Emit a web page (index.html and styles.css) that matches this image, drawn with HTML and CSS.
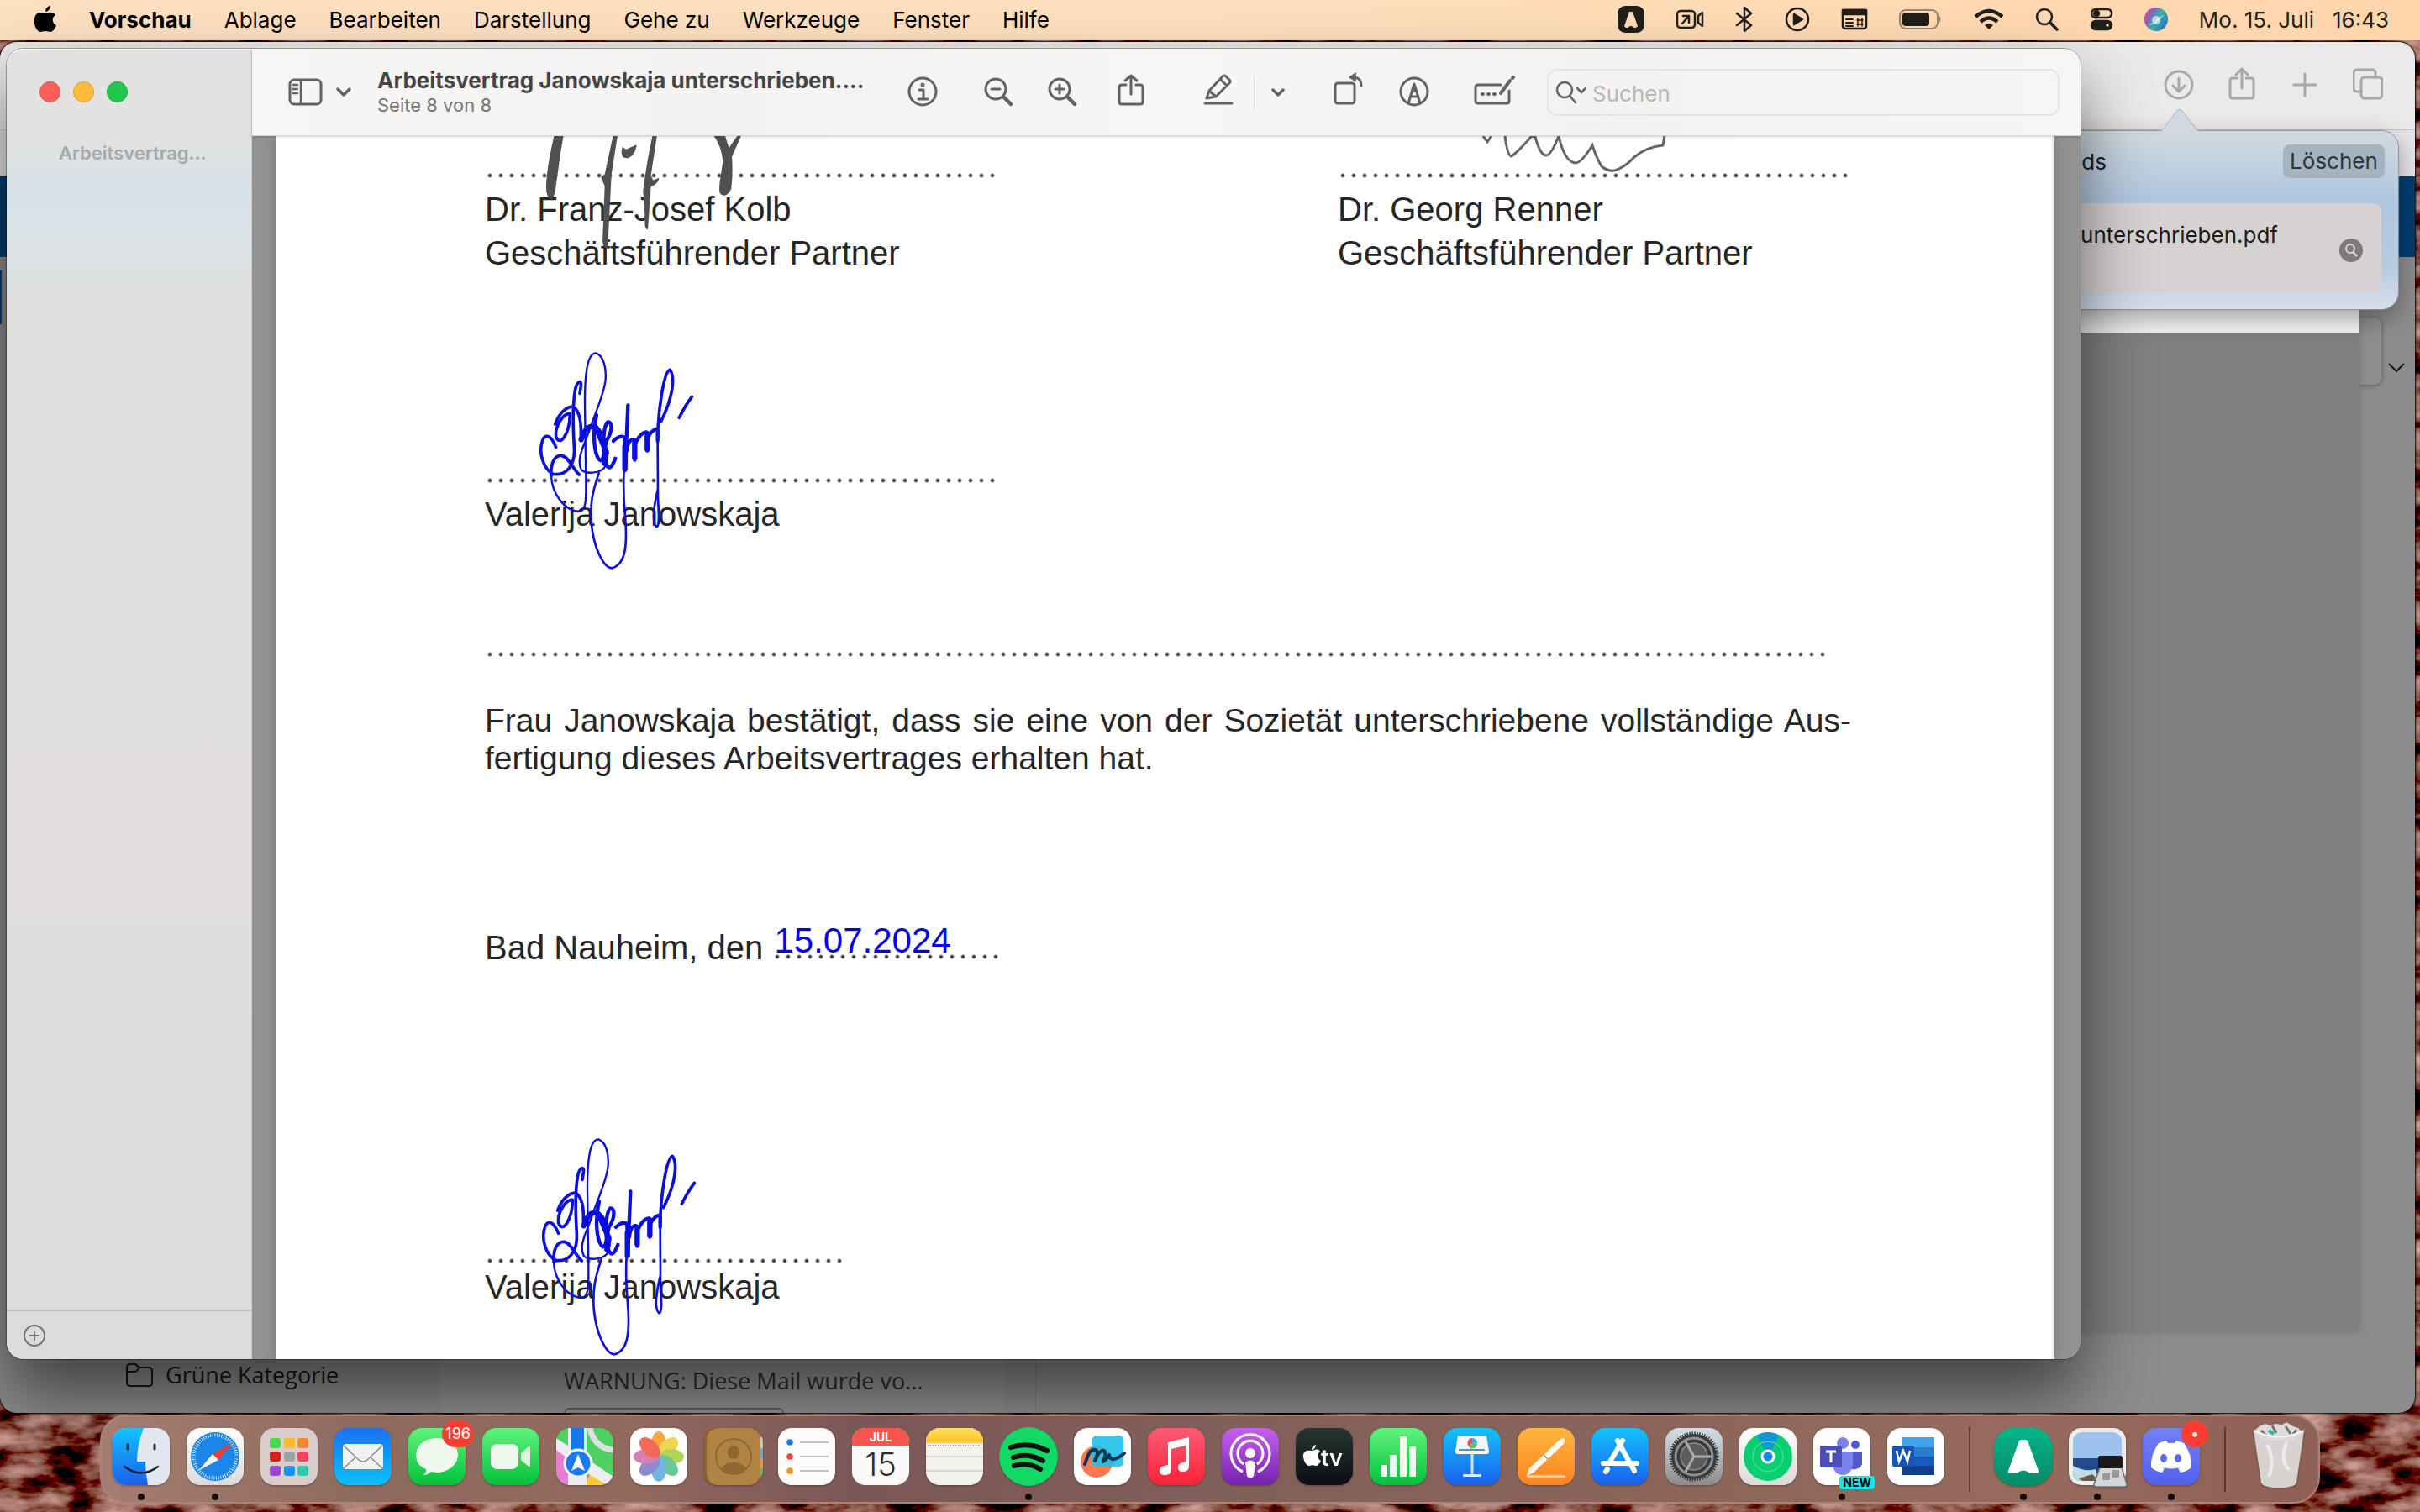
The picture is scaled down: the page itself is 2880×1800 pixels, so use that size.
FILE: index.html
```html
<!DOCTYPE html>
<html lang="de">
<head>
<meta charset="utf-8">
<title>Vorschau</title>
<link rel="stylesheet" href="styles.css">
</head>
<body>
<div class="desktop">
  <svg class="wallpaper" aria-hidden="true">
    <filter id="rock" x="0" y="0" width="100%" height="100%">
      <feTurbulence type="fractalNoise" baseFrequency="0.018 0.04" numOctaves="5" seed="8"/>
      <feColorMatrix values="1.3 0 0 0 -.42  .9 0 0 0 -.38  .8 0 0 0 -.35  0 0 0 0 1"/>
    </filter>
    <rect width="100%" height="100%" filter="url(#rock)"/>
  </svg>

  <header class="menubar">
    <nav class="menus">
      <button class="apple" aria-label="Apple"><svg width="26" height="32" viewBox="0 0 26 32"><path d="M13 9c2 0 4-2 7-1 2 0 4 1 5 3-5 3-4 10 1 12-1 3-4 8-7 8-2 0-3-1-6-1s-4 1-6 1c-4 0-8-8-7-14C0 10 4 8 7 8c3 0 4 1 6 1zM13 7c0-4 3-7 6-7 0 4-3 7-6 7z"/></svg></button>
      <button class="menu current">Vorschau</button>
      <button class="menu">Ablage</button>
      <button class="menu">Bearbeiten</button>
      <button class="menu">Darstellung</button>
      <button class="menu">Gehe zu</button>
      <button class="menu">Werkzeuge</button>
      <button class="menu">Fenster</button>
      <button class="menu">Hilfe</button>
    </nav>
    <div class="status">
      <svg width="32" height="32" viewBox="0 0 32 32"><rect width="32" height="32" rx="9" fill="#221e1a"/><path d="M14 7h4l6 17-2 2h-2q-4-4-8 0h-2l-2-2z" fill="#fddcb8"/></svg>
      <svg class="line" width="34" height="28" viewBox="0 0 34 28"><rect x="2" y="4" width="21" height="20" rx="4"/><path d="M8 19l8-9M9 10h7v8M27 10l5-4v16l-5-4z"/></svg>
      <svg class="line" width="22" height="30" viewBox="0 0 22 30"><path d="M2 8l17 14-8 7V1l8 7L2 22"/></svg>
      <svg class="line" width="30" height="30" viewBox="0 0 30 30"><circle cx="15" cy="15" r="13"/><path d="M11 9l10 6-10 6z" fill="#221e1a"/></svg>
      <svg class="line" width="32" height="26" viewBox="0 0 32 26"><rect x="2" y="2" width="28" height="22" rx="3"/><path d="M2 2h28v5H2z" fill="#221e1a"/><path d="M6 13h8M6 17h8M6 21h8" stroke-width="2"/><path d="M19 14h7M19 19h7M20 12v9M25 12v9" stroke-width="1.5"/></svg>
      <svg width="52" height="26" viewBox="0 0 52 26"><rect x="1" y="2" width="45" height="22" rx="7" fill="none" stroke="#9a8775" stroke-width="2"/><rect x="4" y="5" width="32" height="16" rx="4" fill="#221e1a"/><path d="M48 9q3 4 0 8z" fill="#9a8775"/></svg>
      <svg width="36" height="26" viewBox="0 0 36 26" fill="none" stroke="#221e1a" stroke-width="4.500"><path d="M2 10q16-14 32 0M8 16q10-9 20 0"/><path d="M13 20q5-4 10 0l-5 5z" fill="#221e1a" stroke="none"/></svg>
      <svg class="line" width="28" height="28" viewBox="0 0 28 28"><circle cx="11" cy="11" r="9"/><path d="M18 18l8 8" stroke-width="3.500"/></svg>
      <svg class="line" width="28" height="28" viewBox="0 0 28 28"><rect x="2" y="2" width="24" height="10" rx="5"/><circle cx="8" cy="7" r="3" fill="#221e1a"/><rect x="2" y="16" width="24" height="10" rx="5" fill="#221e1a"/><circle cx="21" cy="21" r="3" fill="#fddcb8"/></svg>
      <svg width="28" height="28" viewBox="0 0 28 28"><defs><linearGradient id="siri" x1="0" x2="1" y2=".6"><stop stop-color="#ec2f7e"/><stop offset=".4" stop-color="#7a6fc4"/><stop offset=".6" stop-color="#38b3a0"/><stop offset="1" stop-color="#2d76c9"/></linearGradient></defs><circle cx="14" cy="14" r="14" fill="url(#siri)"/><circle cx="14" cy="15" r="5" fill="#fff" opacity=".6"/><path d="M4 20q8-2 10-5 4-5 10-6-4 4-8 7-5 5-12 4z" fill="#fff" opacity=".5"/></svg>
      <time class="clock">Mo. 15. Juli&nbsp;&nbsp; 16:43</time>
    </div>
  </header>

  <section class="browser">
    <div class="browser-bar">
      <button aria-label="Downloads anzeigen"><svg width="36" height="40" viewBox="0 0 36 40"><circle cx="18" cy="21" r="16"/><path d="M18 13v16M11 22l7 7 7-7"/></svg></button>
      <button aria-label="Teilen"><svg width="36" height="40" viewBox="0 0 36 40"><path d="M13 13H7q-3 0-3 3v18q0 3 3 3h22q3 0 3-3V16q0-3-3-3h-6M18 25V2M11 9l7-7 7 7"/></svg></button>
      <button aria-label="Neuer Tab"><svg width="36" height="40" viewBox="0 0 36 40"><path d="M18 8v26M5 21h26"/></svg></button>
      <button aria-label="Tabübersicht"><svg width="36" height="40" viewBox="0 0 36 40"><rect x="10" y="12" width="25" height="25" rx="4"/><path d="M10 29H5q-4 0-4-4V7q0-4 4-4h18q4 0 4 4v5"/></svg></button>
    </div>
    <div class="tabs"></div>
    <div class="mail-head"></div>
    <div class="mail">
      <div class="folders">
        <a class="folder" href="#"><svg width="34" height="30" viewBox="0 0 34 30"><path d="M2 24V6q0-4 4-4h6l5 4h11q4 0 4 4v14q0 4-4 4H6q-4 0-4-4zM2 11h9q3 0 6-5"/></svg>Grüne Kategorie</a>
      </div>
      <div class="messages"><p class="snippet">WARNUNG: Diese Mail wurde vo...</p><div class="attachment"></div></div>
      <div class="reading"></div>
    </div>
    <div class="side-card"></div>
    <svg class="expand" width="22" height="14" viewBox="0 0 22 14"><path d="M2 2l9 9 9-9"/></svg>
    <div class="viewer"></div>
    <div class="popover">
      <svg class="arrow" width="56" height="27" viewBox="0 0 56 27"><path d="M0 27q7 0 11-6L24 3q4-5 8 0l13 18q4 6 11 6z" fill="#d0d9e1"/><path d="M0 26q7 0 11-6L24 3q4-5 8 0l13 17q4 6 11 6" fill="none" stroke="#a9afb5"/></svg>
      <div class="popover-head"><span>Downloads</span><button class="clear">Löschen</button></div>
      <div class="download"><span>unterschrieben.pdf</span><button class="reveal" aria-label="Im Finder zeigen"><svg width="28" height="28" viewBox="0 0 28 28"><circle cx="14" cy="14" r="14" fill="#7d7a79"/><circle cx="13" cy="12" r="5" fill="none" stroke="#d6d2d1" stroke-width="2"/><path d="M16 16l5 5" stroke="#d6d2d1" stroke-width="2.500"/></svg></button></div>
    </div>
  </section>

  <main class="preview">
    <aside class="sidebar">
      <div class="lights"><button class="light close" aria-label="Schließen"></button><button class="light min" aria-label="Minimieren"></button><button class="light max" aria-label="Zoomen"></button></div>
      <p class="thumb-title">Arbeitsvertrag...</p>
      <footer class="side-foot"><button aria-label="Hinzufügen"><svg width="28" height="28" viewBox="0 0 28 28"><circle cx="14" cy="14" r="12"/><path d="M14 8v12M8 14h12"/></svg></button></footer>
    </aside>
    <div class="pane">
      <div class="toolbar">
        <button class="tool side" aria-label="Seitenleiste"><svg width="74" height="44" viewBox="0 0 74 44"><rect x="2" y="7" width="37" height="29" rx="5"/><path d="M15 7v29M6 13h5M6 18h5M6 23h5" stroke-width="2.500"/><path d="M59 18l7 7 7-7" stroke-width="3.500"/></svg></button>
        <div class="doc-title"><h1>Arbeitsvertrag Janowskaja unterschrieben....</h1><p>Seite 8 von 8</p></div>
        <button class="tool" aria-label="Info"><svg width="44" height="44" viewBox="0 0 44 44"><circle cx="22" cy="21" r="16"/><path d="M18 19h5v10M17 30h11"/><circle cx="22" cy="13" r="1"/></svg></button>
        <button class="tool g46" aria-label="Verkleinern"><svg width="44" height="44" viewBox="0 0 44 44"><circle cx="19" cy="18" r="12"/><path d="M14 18h10"/><path d="M28 27l9 9" stroke-width="4.500"/></svg></button>
        <button class="tool g32" aria-label="Vergrößern"><svg width="44" height="44" viewBox="0 0 44 44"><circle cx="19" cy="18" r="12"/><path d="M14 18h10M19 13v10"/><path d="M28 27l9 9" stroke-width="4.500"/></svg></button>
        <button class="tool g38" aria-label="Teilen"><svg width="44" height="44" viewBox="0 0 44 44"><path d="M16 13h-5q-3 0-3 3v17q0 3 3 3h22q3 0 3-3V16q0-3-3-3h-5M22 24V2M15 8l7-6 7 6"/></svg></button>
        <button class="tool g60" aria-label="Markieren"><svg width="44" height="44" viewBox="0 0 44 44"><path d="M6 35h32M8 29l3-9L27 3q2-2 4 0l4 4q2 2 0 4L19 27zM11 20l8 7M25 7l7 7"/></svg></button>
        <span class="sep"></span>
        <button class="tool g14" aria-label="Markierungsfarbe"><svg width="28" height="44" viewBox="0 0 28 44"><path d="M8 19l6 6 6-6" stroke-width="3.500"/></svg></button>
        <button class="tool g48" aria-label="Drehen"><svg width="44" height="44" viewBox="0 0 44 44"><rect x="6" y="11" width="23" height="24" rx="3"/><path d="M24 4h5q8 1 8 10"/><path d="M30-1l-7 5 7 5z" fill="#636261" stroke-width="1"/></svg></button>
        <button class="tool g34" aria-label="Markierungswerkzeuge"><svg width="44" height="44" viewBox="0 0 44 44"><circle cx="22" cy="21" r="16"/><path d="M15 35l6-20h2l6 20M18 27h8"/><path d="M20 20l2-8 2 8z" fill="#636261"/></svg></button>
        <button class="tool g48" aria-label="Formular"><svg width="52" height="44" viewBox="0 0 52 44"><path d="M33 13H6q-3 0-3 3v16q0 3 3 3h34q3 0 3-3V20"/><path d="M33 23l11-15M47 5l1-1" stroke-width="4"/><path d="M11 24h1M18 24h1M25 24h1" stroke-width="4"/></svg></button>
        <label class="search"><svg width="40" height="28" viewBox="0 0 40 28"><circle cx="11" cy="11" r="9"/><path d="M17 18l7 8M26 9l5 5 5-5"/></svg><input type="text" placeholder="Suchen" aria-label="Suchen"></label>
      </div>
      <div class="canvas">
        <article class="page">
          <svg class="ink kolb" viewBox="200 35 600 400" preserveAspectRatio="none"><path d="M268 35l25 0-8 60-12 110q-4 40-12 45-14-5-14-40 0-60 21-175zM425 35h12l-16 130-10 250q-10 5-14-20l6-190-10-30 10-10zM530 35h12l-16 135 6 15 16-8q-2 20-22 30l-8 145q-8 2-8-20 0-60-5-110 10-100 25-187zM694 35h30l10 40 22-40h10l-24 70q3 60-2 110-14 35-30 15-4-15 2-60l6-50q-4-50-24-85zM450 72l10 8 28-16q-4 40-26 46-20 0-12-38z"/></svg>
          <svg class="ink renner" viewBox="0 0 220 48" preserveAspectRatio="none"><path d="M1 0l5 7 5-7M27 0q3 24 8 24 6-4 24-24l4 1q6 22 13 22 6 0 15-23 7 31 20 32 7 0 20-21 5 15 11 25 7 6 15 5 12-3 24-16 14-12 34-14l2-12"/></svg>
          <div class="pair">
            <div><div class="dots"></div><p>Dr. Franz-Josef Kolb<br>Geschäftsführender Partner</p></div>
            <div><div class="dots"></div><p>Dr. Georg Renner<br>Geschäftsführender Partner</p></div>
          </div>
          <div class="signed first">
            <div class="dots"></div><p>Valerija Janowskaja</p>
            <svg class="autograph" width="210" height="280" viewBox="0 0 630 840"><g id="autograph"><path d="M95 382C80 345 60 330 48 355C30 400 50 460 85 478C130 485 165 450 160 380C155 300 155 230 163 180C168 150 188 135 184 165L180 190M145 262C120 260 90 310 95 345C110 385 145 330 145 262M92 300C110 250 150 225 165 245C185 270 185 310 184 355M78 485C75 440 90 410 115 412C140 415 155 460 178 480" stroke-width="11"/><path d="M78 485C80 540 120 610 180 612C205 605 202 560 202 500L198 220C198 130 205 45 238 46C265 55 275 100 272 140C268 190 235 260 220 305C200 370 165 420 185 462C200 480 250 475 268 455C285 430 265 330 235 310C215 300 195 300 185 350" stroke-width="7"/><path d="M240 268C225 330 230 400 248 425C265 445 265 400 275 360C300 320 295 290 280 292C262 310 262 380 270 430C285 480 300 440 307 422M235 310C260 320 272 370 275 425M300 360C320 340 335 342 340 350L342 465L352 232M348 395C350 360 370 345 378 360L376 428M378 370C395 330 420 320 424 335L421 395M424 345C440 318 460 310 458 325L458 360" stroke-width="13"/><path d="M185 355C200 315 215 300 238 312L275 400L268 440M341 380V460M376 365V420M421 340V390" stroke-width="19"/><path d="M248 475C225 540 215 590 222 660C230 740 265 815 295 814C345 800 350 730 342 630C335 560 335 520 338 460M458 360L459 540C458 600 470 660 454 667C435 650 445 590 458 535" stroke-width="8"/><path d="M458 345C460 250 480 110 502 106C520 130 515 200 470 290M535 277Q555 235 580 202" stroke-width="11"/></g></svg>
          </div>
          <div class="dots rule"></div>
          <p class="receipt">Frau Janowskaja bestätigt, dass sie eine von der Sozietät unterschriebene vollständige Aus&shy;fertigung dieses Arbeitsvertrages erhalten hat.</p>
          <p class="place">Bad Nauheim, den <span class="blank"><span class="date">15.07.2024</span><span class="dots"></span></span></p>
          <div class="signed last">
            <div class="dots"></div><p>Valerija Janowskaja</p>
            <svg class="autograph" width="210" height="280" viewBox="0 0 630 840"><use href="#autograph"/></svg>
          </div>
        </article>
      </div>
    </div>
  </main>

  <svg class="defs" width="0" height="0" aria-hidden="true"><defs>
    <linearGradient id="blue" x2="0" y2="1"><stop stop-color="#1a72f2"/><stop offset="1" stop-color="#0bc0fc"/></linearGradient>
    <linearGradient id="blue2" x2="0" y2="1"><stop stop-color="#12c4fd"/><stop offset="1" stop-color="#1a5fec"/></linearGradient>
    <linearGradient id="green" x2="0" y2="1"><stop stop-color="#5ff47c"/><stop offset="1" stop-color="#03c03a"/></linearGradient>
    <linearGradient id="white" x2="0" y2="1"><stop stop-color="#fff"/><stop offset="1" stop-color="#dcdbd9"/></linearGradient>
    <linearGradient id="orange" x2="0" y2="1"><stop stop-color="#ffb63c"/><stop offset="1" stop-color="#fd8324"/></linearGradient>
    <linearGradient id="red" x2="0" y2="1"><stop stop-color="#fd5b74"/><stop offset="1" stop-color="#fb2239"/></linearGradient>
    <linearGradient id="purple" x2="0" y2="1"><stop stop-color="#c75ff0"/><stop offset="1" stop-color="#7423ae"/></linearGradient>
    <linearGradient id="black" x2="0" y2="1"><stop stop-color="#26352f"/><stop offset="1" stop-color="#0b1012"/></linearGradient>
    <linearGradient id="teal" x2="0" y2="1"><stop stop-color="#05b58a"/><stop offset="1" stop-color="#068a67"/></linearGradient>
    <linearGradient id="steel" x2="0" y2="1"><stop stop-color="#d2dfe8"/><stop offset="1" stop-color="#8d8c8a"/></linearGradient>
    <linearGradient id="note" x2="0" y2="1"><stop stop-color="#fede60"/><stop offset="1" stop-color="#fdc521"/></linearGradient>
    <linearGradient id="blurple" x2="0" y2="1"><stop stop-color="#7480f5"/><stop offset="1" stop-color="#5260ee"/></linearGradient>
    <clipPath id="tile"><rect width="68" height="68" rx="16"/></clipPath>
  </defs></svg>

  <nav class="dock">
    <button class="app open" aria-label="Finder"><svg viewBox="0 0 68 68"><g clip-path="url(#tile)"><path fill="#e3e8ee" d="M0 0h68v68H0z"/><path d="M0 0h37q-8 20-8 40h10q0 14 3 28H0z" fill="url(#blue2)"/></g><path d="M18 20v5M50 20v5" stroke="#20304a" stroke-width="3" stroke-linecap="round"/><path d="M14 46q20 15 40 0" fill="none" stroke="#14253b" stroke-width="2.500" stroke-linecap="round"/></svg></button>
    <button class="app open" aria-label="Safari"><svg viewBox="0 0 68 68"><rect width="68" height="68" rx="16" fill="url(#white)"/><circle cx="34" cy="34" r="29" fill="#1b86e8"/><circle cx="34" cy="34" r="25.500" fill="none" stroke="#d4ecfc" stroke-width="4" stroke-dasharray="1 1.700"/><path d="M55 17L38 38l-7-7z" fill="#f03a34"/><path d="M14 51l17-20 7 7z" fill="#f4f4f4"/></svg></button>
    <button class="app" aria-label="Launchpad"><svg viewBox="0 0 68 68"><rect width="68" height="68" rx="16" fill="#d9cecb"/><g><rect x="11" y="12" width="13" height="12" rx="3" fill="#41dc46"/><rect x="28" y="12" width="13" height="12" rx="3" fill="#fbbd27"/><rect x="44" y="12" width="13" height="12" rx="3" fill="#f6892b"/><rect x="11" y="28" width="13" height="12" rx="3" fill="#d4211d"/><rect x="28" y="28" width="13" height="12" rx="3" fill="#9aa3a6"/><rect x="44" y="28" width="13" height="12" rx="3" fill="#fb4260"/><rect x="11" y="45" width="13" height="12" rx="3" fill="#9c46cf"/><rect x="28" y="45" width="13" height="12" rx="3" fill="#1493f8"/><rect x="44" y="45" width="13" height="12" rx="3" fill="#2fcaa9"/></g></svg></button>
    <button class="app" aria-label="Mail"><svg viewBox="0 0 68 68"><rect width="68" height="68" rx="16" fill="url(#blue)"/><rect x="10" y="19" width="48" height="30" rx="4" fill="#f1f1f2"/><path d="M11 21l18 17q5 4 10 0l18-17M11 48l14-13M57 48L43 35" fill="none" stroke="#8b8d90" stroke-width="1.500"/></svg></button>
    <button class="app" aria-label="Nachrichten"><svg viewBox="0 0 68 68"><rect width="68" height="68" rx="16" fill="url(#green)"/><path d="M34 12c14 0 25 9 25 20S48 53 34 53l-7-1q-4 4-9 4 4-3 3-7C13 46 9 40 9 32c0-11 11-20 25-20z" fill="#ecf8ec"/></svg><span class="badge">196</span></button>
    <button class="app" aria-label="FaceTime"><svg viewBox="0 0 68 68"><rect width="68" height="68" rx="16" fill="url(#green)"/><rect x="10" y="19" width="33" height="30" rx="8" fill="#eef9ee"/><path d="M46 30l9-8q2-1 2 1v22q0 2-2 1l-9-8z" fill="#dff2df"/></svg></button>
    <button class="app" aria-label="Karten"><svg viewBox="0 0 68 68"><g clip-path="url(#tile)"><path fill="#4fd062" d="M0 0h68v68H0z"/><path d="M0 25l68 58H0z" fill="#e87ed0"/><path d="M34 68l8-16 26 16z" fill="#fcca2b"/><path d="M0 12l68 46v14L40 56 0 26z" fill="#ececf1"/><path d="M14 0h22v68H14z" fill="#ececf1"/><path d="M18 0h15v34H18z" fill="#1278f2"/><path d="M40 0q5 24 28 26" fill="none" stroke="#dedee3" stroke-width="7"/></g><circle cx="26" cy="42" r="16" fill="#1a7af0" stroke="#f4f4f8" stroke-width="3"/><path d="M26 31l8 20-8-4-8 4z" fill="#fff"/></svg></button>
    <button class="app" aria-label="Fotos"><svg viewBox="0 0 68 68"><rect width="68" height="68" rx="16" fill="#fdfdfd"/><g class="petals"><ellipse cx="34" cy="19" rx="9" ry="15" fill="#f99a1f"/><ellipse cx="34" cy="19" rx="9" ry="15" fill="#e9d32d" transform="rotate(45 34 34)"/><ellipse cx="34" cy="19" rx="9" ry="15" fill="#a8cd3d" transform="rotate(90 34 34)"/><ellipse cx="34" cy="19" rx="9" ry="15" fill="#4fbf86" transform="rotate(135 34 34)"/><ellipse cx="34" cy="19" rx="9" ry="15" fill="#5cabe0" transform="rotate(180 34 34)"/><ellipse cx="34" cy="19" rx="9" ry="15" fill="#7a78c8" transform="rotate(225 34 34)"/><ellipse cx="34" cy="19" rx="9" ry="15" fill="#cf6ba6" transform="rotate(270 34 34)"/><ellipse cx="34" cy="19" rx="9" ry="15" fill="#f4503c" transform="rotate(315 34 34)"/></g></svg></button>
    <button class="app" aria-label="Kontakte"><svg viewBox="0 0 68 68"><path d="M60 9h6q4 2 4 6v9H60z" fill="#c9c6bd"/><path d="M60 24h10v13H60z" fill="#49b1ea"/><path d="M60 37h10v11H60z" fill="#f7962c"/><path d="M60 48h10q0 10-4 12h-6z" fill="#44c862"/><rect width="67" height="68" rx="14" fill="#8c632d"/><rect x="3" width="64" height="68" rx="14" fill="#b08244"/><circle cx="35" cy="34" r="21" fill="none" stroke="#8a6330" stroke-width="1.500"/><ellipse cx="35" cy="29" rx="7" ry="8" fill="#8f6730"/><path d="M20 48q5-7 15-7t15 7q-6 7-15 7t-15-7z" fill="#8f6730"/></svg></button>
    <button class="app" aria-label="Erinnerungen"><svg viewBox="0 0 68 68"><rect width="68" height="68" rx="16" fill="#fcfbfa"/><path d="M26 17h34M26 34h34M26 51h34" stroke="#c2c1c3" stroke-width="2"/><g stroke="#fff" stroke-width="1.500"><circle cx="14" cy="17" r="6" fill="#1778f4"/><circle cx="14" cy="17" r="4.500" fill="#1778f4"/><circle cx="14" cy="34" r="6" fill="#f3402f"/><circle cx="14" cy="34" r="4.500" fill="#f3402f"/><circle cx="14" cy="51" r="6" fill="#f8941f"/><circle cx="14" cy="51" r="4.500" fill="#f8941f"/></g></svg></button>
    <button class="app" aria-label="Kalender"><span class="cal"><span class="cal-month">JUL</span><span class="cal-day">15</span></span></button>
    <button class="app" aria-label="Notizen"><svg viewBox="0 0 68 68"><g clip-path="url(#tile)"><path fill="#f3f1ed" d="M0 0h68v68H0z"/><path fill="url(#note)" d="M0 0h68v17H0z"/></g><path d="M0 18h68M0 34h68M0 51h68" stroke="#cfcdca" stroke-width="1.500"/><path d="M2 20.500h64" stroke="#8e8c8a" stroke-dasharray="1 2"/></svg></button>
    <button class="app open" aria-label="Spotify"><svg viewBox="0 0 68 68"><circle cx="34" cy="34" r="35" fill="#12d865"/><path d="M13 23q22-7 43 4M16 35q18-6 35 4M17 45q16-5 31 4" fill="none" stroke="#111" stroke-width="6" stroke-linecap="round"/></svg></button>
    <button class="app" aria-label="Freeform"><svg viewBox="0 0 68 68"><rect width="68" height="68" rx="16" fill="#fff"/><circle cx="27" cy="40" r="19" fill="#fb7a54"/><rect x="22" y="9" width="37" height="37" rx="5" fill="#1fc0ea" opacity=".9"/><path d="M13 43l5-13q3-5 8-4 4 2-1 13 6-14 11-12 3 3-1 13 6-5 7-8 1 6 6 5 5-1 12-7" fill="none" stroke="#0c3552" stroke-width="4" stroke-linejoin="round" stroke-linecap="round"/></svg></button>
    <button class="app" aria-label="Musik"><svg viewBox="0 0 68 68"><rect width="68" height="68" rx="16" fill="url(#red)"/><path d="M24 17l25-6v34q0 6-6 7-7 1-7-5 0-5 6-6l3-1V21l-17 4v24q0 6-6 7-8 1-8-5 0-5 6-6l4-1z" fill="#fff"/></svg></button>
    <button class="app" aria-label="Podcasts"><svg viewBox="0 0 68 68"><rect width="68" height="68" rx="16" fill="url(#purple)"/><g fill="none" stroke="#fff" stroke-width="3"><path d="M25 52a23 23 0 1 1 18 0M26 43a15 15 0 1 1 16 0"/></g><circle cx="34" cy="30" r="6" fill="#fff"/><path d="M28 41q6-5 12 0l-2 16q-4 5-8 0z" fill="#fff"/></svg></button>
    <button class="app" aria-label="TV"><svg viewBox="0 0 68 68"><rect width="68" height="68" rx="16" fill="url(#black)"/><path d="M19 27c3 0 7-4 10 1-4 3-3 9 1 11-2 4-4 6-6 6-3-1-5-1-8 0-4 0-7-7-7-12 0-6 5-7 10-6zm0-1q0-5 5-6 0 5-5 6z" fill="#fff"/><text x="30" y="45" class="tv">tv</text></svg></button>
    <button class="app" aria-label="Numbers"><svg viewBox="0 0 68 68"><rect width="68" height="68" rx="16" fill="url(#green)"/><g fill="#f1f8f1"><rect x="13" y="44" width="8" height="14" rx="1"/><rect x="24" y="32" width="8" height="26" rx="1"/><rect x="36" y="10" width="8" height="48" rx="1"/><rect x="47" y="22" width="8" height="36" rx="1"/></g></svg></button>
    <button class="app" aria-label="Keynote"><svg viewBox="0 0 68 68"><rect width="68" height="68" rx="16" fill="url(#blue2)"/><path d="M34 30v27" stroke="#d5e2ee" stroke-width="3"/><rect x="23" y="55" width="22" height="3" rx="1" fill="#e9eef4"/><path d="M17 9h34l3 19q0 3-3 3H17q-3 0-3-3z" fill="#f4f6f8"/><path d="M18 26h31" stroke="#5796ac" stroke-width="2"/><path d="M34 18v-6a6 6 0 0 0-4 10z" fill="#e84d66"/><path d="M34 18v-6a6 6 0 0 1 6 7z" fill="#3caee8"/><path d="M34 18l6 1a6 6 0 0 1-10 4z" fill="#5cc457"/></svg></button>
    <button class="app" aria-label="Pages"><svg viewBox="0 0 68 68"><rect width="68" height="68" rx="16" fill="url(#orange)"/><path d="M11 57.500h46" stroke="#fed6a2" stroke-width="2.500"/><path d="M11 57l3-9 36-34q4-3 6-1 1 3-2 7L19 53z" fill="#fcf7f2"/><path d="M31 32l5 5" stroke="#a98968" stroke-width="1.500"/></svg></button>
    <button class="app" aria-label="App Store"><svg viewBox="0 0 68 68"><rect width="68" height="68" rx="16" fill="url(#blue2)"/><path d="M31 15l20 36M37 15L21 42M14 42h40M19 49l-2 3" stroke="#fff" stroke-width="6" stroke-linecap="round"/></svg></button>
    <button class="app" aria-label="Systemeinstellungen"><svg viewBox="0 0 68 68"><rect width="68" height="68" rx="16" fill="url(#steel)"/><circle cx="34" cy="34" r="27" fill="#3a3b3c"/><circle cx="34" cy="34" r="28" fill="none" stroke="#2f3031" stroke-width="3" stroke-dasharray="1.500 1.500"/><circle cx="34" cy="34" r="22" fill="none" stroke="#8f9192" stroke-width="3"/><circle cx="34" cy="34" r="16" fill="#5b5c5d" stroke="#8f9192" stroke-width="1.500"/><path d="M34 34h21M34 34L24 16M34 34L24 52" stroke="#a9abac" stroke-width="3"/></svg></button>
    <button class="app" aria-label="Wo ist?"><svg viewBox="0 0 68 68"><rect width="68" height="68" rx="16" fill="url(#white)"/><circle cx="34" cy="34" r="29" fill="#08d070"/><path d="M34 34L21 9q13-8 26 0z" fill="#1587f2" opacity=".8"/><circle cx="34" cy="34" r="18" fill="none" stroke="#62e8a4"/><circle cx="34" cy="34" r="7" fill="#1686f4" stroke="#fff" stroke-width="3"/></svg></button>
    <button class="app open" aria-label="Teams"><svg viewBox="0 0 68 68"><rect width="68" height="68" rx="16" fill="#fff"/><circle cx="35" cy="18" r="7" fill="#7a80e8"/><circle cx="50" cy="20" r="5" fill="#5059c9"/><path d="M45 28h13v15q-2 7-13 6z" fill="#5059c9"/><path d="M23 28h24v16q-2 12-12 12T23 44z" fill="#7b83eb"/><rect x="8" y="21" width="26" height="26" rx="2" fill="#4a50b8"/><path d="M15 28h12M21 28v13" stroke="#fff" stroke-width="3"/></svg><span class="new">NEW</span></button>
    <button class="app" aria-label="Word"><svg viewBox="0 0 68 68"><rect width="68" height="68" rx="16" fill="#fff"/><path d="M18 11h38v12H18z" fill="#41a5ee"/><path d="M18 23h38v11H18z" fill="#2b7cd3"/><path d="M18 34h38v11H18z" fill="#185abd"/><path d="M18 45h38v11H18z" fill="#103f91"/><rect x="6" y="21" width="26" height="25" rx="2" fill="#1553b5"/><path d="M11 27l3 13 5-13 5 13 3-13" fill="none" stroke="#fff" stroke-width="2.500"/></svg></button>
    <span class="divider"></span>
    <button class="app open" aria-label="Aircall"><svg viewBox="0 0 68 68"><rect x="-1" y="-1" width="70" height="70" rx="26" fill="url(#teal)"/><path d="M32 14h4q3 0 4 4l12 33q1 3-3 3h-6q-2 0-4-2-5-3-10 0-2 2-4 2h-6q-4 0-3-3l12-33q1-4 4-4z" fill="#fff"/></svg></button>
    <button class="app open" aria-label="Vorschau"><svg viewBox="0 0 68 68"><rect width="68" height="68" rx="15" fill="#efedec"/><rect x="5" y="5" width="58" height="58" rx="11" fill="#9dc2ee"/><path d="M5 36h58v16q0 11-11 11H16Q5 63 5 52z" fill="#234a8a"/><path d="M5 45q15 8 27 4l4 14H16Q5 63 5 52z" fill="#c3dbe4"/><path d="M12 60l16-5 8 8H16z" fill="#675a48"/><path d="M37 47h26l6 20q0 3-3 3H33q-3 0-3-3z" fill="#d4d6d8" stroke="#6d7073" stroke-width="1.500"/><path d="M40 54h9v8h-9zM52 50h8v9h-8z" fill="#97999b"/><rect x="35" y="33" width="29" height="15" rx="3" fill="#19191a"/></svg></button>
    <button class="app open" aria-label="Discord"><svg viewBox="0 0 68 68"><rect width="68" height="68" rx="16" fill="url(#blurple)"/><path d="M19 18l9-3 2 3h8l2-3 9 3q10 14 9 29-6 5-13 6l-3-5 4-2q-12 5-24 0l4 2-3 5q-7-1-13-6-1-15 9-29z" fill="#fff"/><ellipse cx="25" cy="36" rx="4" ry="5" fill="#5f6bf0"/><ellipse cx="42" cy="36" rx="4" ry="5" fill="#5f6bf0"/></svg><span class="badge">•</span></button>
    <span class="divider"></span>
    <button class="app" aria-label="Papierkorb"><svg viewBox="0 0 68 68"><path d="M4 4l8-7 6-2 6 2 6-2 8 1 5-3 8 5 6 2 6 6-10 9H14z" fill="#dcdcdb"/><path d="M13 3l7 7M26-3l5 9M42-2l6 9M55 2l-5 7" stroke="#77706b" stroke-width="3"/><path d="M22 3l6 4" stroke="#2fb99b" stroke-width="4"/><path d="M4 3q30 15 60 0l-9 62q-2 6-21 6t-21-6z" fill="#dbdad9" opacity=".95"/><path d="M4 3q30 15 60 0" fill="none" stroke="#f4f4f4" stroke-width="2"/><path d="M20 20q10 18 2 38M44 16q-10 20 2 34" stroke="#ebebea" stroke-width="4" fill="none"/></svg></button>
  </nav>
</div>
</body>
</html>
```
FILE: styles.css
```css
* { box-sizing: border-box; }
body { margin: 0; font-family: Inter, "Liberation Sans", sans-serif; font-size: 26px; color: #221e1a; }
button { border: 0; padding: 0; background: none; font: inherit; color: inherit; }
p, h1 { margin: 0; }
svg { display: block; }

.desktop { position: relative; min-height: 100vh; overflow: hidden; background: #1c0805; }
.wallpaper { position: absolute; inset: 0; width: 100%; height: 100%; }

/* Menu bar */
.menubar { position: relative; display: flex; justify-content: space-between; align-items: center; height: 48px; padding: 0 37px 2px 41px; background: linear-gradient(90deg, #fddfc1, #fee0bd 50%, #ffd5ab); }
.menus { display: flex; align-items: center; gap: 39px; color: #000; }
.current { font-weight: 700; }
.status { display: flex; align-items: center; gap: 37px; }
.line { fill: none; stroke: #221e1a; stroke-width: 2.5; stroke-linejoin: round; stroke-linecap: round; }

/* Browser window behind */
.browser { position: absolute; inset: 50px 6px 118px 0; display: flex; flex-direction: column; border-radius: 20px; overflow: hidden; background: #8c8c8c; box-shadow: 0 0 2px 1px #000; }
.browser-bar { display: flex; justify-content: flex-end; align-items: center; gap: 39px; height: 105px; padding: 0 38px 5px; background: #ebe9ea; border-bottom: 1px solid #c6c4c6; }
.browser-bar svg { fill: none; stroke: #a9a7a8; stroke-width: 3; stroke-linecap: round; stroke-linejoin: round; }
.tabs { height: 55px; background: #e6e4e6; }
.mail-head { height: 96px; background: #003c6e; }
.mail { flex: 1; display: grid; grid-template-columns: 524px 671px 1fr; }
.folders, .messages { display: flex; flex-direction: column; justify-content: flex-end; }
.folders::before { content: ""; width: 2px; height: 64px; margin: 16px 0 auto; background: #003c6e; }
.messages { background: #919191; padding-left: 147px; }
.reading { margin-left: 37px; border-left: 1px solid #7e7e7e; }
.folder { display: flex; align-items: center; gap: 14px; padding: 0 0 27px 149px; color: #161616; text-decoration: none; font: 27px/36px "Open Sans", sans-serif; }
.folder svg, .expand { fill: none; stroke: #161616; stroke-width: 2; }
.snippet { font: 27px/36px "Open Sans", sans-serif; color: #2e2e2e; }
.attachment { width: 262px; height: 6px; margin-top: 14px; border: 2px solid #606060; border-bottom: 0; border-radius: 6px 6px 0 0; }
.side-card { position: absolute; right: 40px; top: 328px; width: 60px; height: 80px; background: #8f8f8f; border-radius: 8px; box-shadow: 0 1px 5px #555; }
.expand { position: absolute; right: 11px; top: 381px; }
.viewer { position: absolute; inset: 256px 66px 97px 1200px; background: #808080; border-top: 90px solid #f3f3f3; box-shadow: 0 0 10px #757575; }
.popover { position: absolute; top: 106px; right: 20px; width: 520px; height: 212px; padding: 16px 20px 20px; border-radius: 20px; background: linear-gradient(#d2dae0, #aec6de 40%, #b5cbe0 75%, #d6dfea); box-shadow: 0 0 1px 1px #8b9299, 0 10px 30px rgba(0,0,0,.35); }
.arrow { position: absolute; right: 232px; top: -26px; }
.popover-head { display: flex; justify-content: flex-end; align-items: center; gap: 210px; margin-right: -4px; color: #15222f; }
.clear { width: 121px; height: 40px; padding-bottom: 2px; border-radius: 8px; background: #a6b2be; color: #2b3740; }
.download { display: flex; justify-content: flex-end; align-items: center; gap: 73px; height: 106px; margin-top: 30px; padding: 0 22px 0 0; border-radius: 10px; background: #d6d2d1; color: #201c1b; }
.download > span { padding-bottom: 32px; }
.reveal { padding-top: 6px; }

/* Preview window */
.preview { position: absolute; inset: 58px 404px 182px 8px; display: flex; border-radius: 20px; overflow: hidden; box-shadow: 0 0 0 1px rgba(0,0,0,.3), 0 40px 80px rgba(0,0,0,.55); }
.preview::after { content: ""; position: absolute; inset: 0; border-radius: 20px; box-shadow: inset 0 1px 0 #fff; pointer-events: none; }
.sidebar { width: 292px; display: flex; flex-direction: column; background: linear-gradient(#e4e2e0 0, #e2e2e0 100px, #d6e1e7 170px, #dbe3e6 230px, #dfdedc 300px, #e0dddc 60%, #dddcda); border-right: 1px solid #cfcdcb; }
.lights { display: flex; gap: 15px; padding: 39px 0 0 39px; }
.light { width: 25px; height: 25px; border-radius: 50%; box-shadow: inset 0 0 0 1px rgba(0,0,0,.12); }
.close { background: #ff5f57; }
.min { background: #febc3a; }
.max { background: #1fc84c; }
.thumb-title { margin: 45px 0 0 62px; font-size: 22px; line-height: 30px; font-weight: 600; color: #a9a9a9; }
.side-foot { margin-top: auto; height: 59px; padding: 15px 19px; border-top: 2px solid #c1bfbe; }
.side-foot svg { fill: none; stroke: #747372; stroke-width: 2; }
.pane { flex: 1; min-width: 0; display: flex; flex-direction: column; }
.toolbar { position: relative; display: flex; align-items: center; height: 104px; padding: 0 25px 0 43px; background: linear-gradient(90deg, #f7f6f4, #f3f2f0 25%, #f7f6f4 50%, #f3f2f0 75%, #f7f6f4); border-bottom: 1px solid #d6d6d6; box-shadow: 0 1px 4px rgba(0,0,0,.18); z-index: 1; }
.tool svg { fill: none; stroke: #636261; stroke-width: 3; stroke-linecap: round; stroke-linejoin: round; overflow: visible; }
.doc-title { flex: 1; min-width: 0; padding: 1px 0 0 32px; white-space: nowrap; }
.doc-title h1 { font-size: 26px; line-height: 30px; font-weight: 700; color: #464544; }
.doc-title p { font-size: 22px; line-height: 28px; color: #777675; }
.g14 { margin-left: 14px; }
.g32 { margin-left: 32px; }
.g34 { margin-left: 34px; }
.g38 { margin-left: 38px; }
.g46 { margin-left: 46px; }
.g48 { margin-left: 48px; }
.g60 { margin-left: 60px; }
.sep { width: 1px; height: 40px; margin-left: 20px; background: #dcdbda; }
.search { display: flex; align-items: center; gap: 4px; width: 610px; height: 56px; margin-left: 36px; padding: 0 8px; border: 2px solid #e6e5e3; border-radius: 12px; }
.search svg { fill: none; stroke: #636261; stroke-width: 2.5; stroke-linecap: round; }
.search input { flex: 1; border: 0; padding: 4px 0 0; background: none; font: inherit; outline: 0; }
.search input::placeholder { color: #b8b7b6; }
.canvas { flex: 1; min-height: 0; overflow: hidden; padding: 0 31px 0 28px; background: #929292; }

/* Document page */
.page { position: relative; height: 100%; padding: 44px 242px 0 249px; background: #fff; box-shadow: inset -3px 0 #ececec, 0 0 12px #777; font: 40px/52px "Liberation Sans", Arial, sans-serif; color: #262626; }
.ink { position: absolute; top: 0; }
.kolb { left: 301px; width: 268px; height: 140px; fill: #505050; }
.renner { left: 1436px; width: 220px; height: 48px; fill: none; stroke: #666; stroke-width: 3; }
.pair { display: grid; grid-template-columns: 5fr 3fr; column-gap: 6px; }
.dots { display: block; width: 611px; height: 6px; background: radial-gradient(circle at 6px 3px, #3a3a3a 1px, #7d7d7d 2px, transparent 3px) 0 0 / 13px 6px; }
.dots + p { margin-top: 11px; }
.signed { position: relative; }
.first { margin-top: 242px; }
.autograph { position: absolute; left: 53px; top: -164px; fill: none; stroke: #0b0ee0; stroke-linecap: round; stroke-linejoin: round; }
.rule { width: 1598px; margin-top: 138px; }
.rule + .receipt { margin-top: 53px; font-size: 39px; line-height: 45px; text-align: justify; }
.place { margin-top: 177px; }
.blank { position: relative; display: inline-block; width: 273px; }
.blank .dots { width: 100%; }
.date { position: absolute; left: 2px; bottom: -4px; font-size: 42px; color: #0000fb; }
.last { margin-top: 344px; }
.last .dots { width: 429px; }
.last .dots + p { margin-top: 2px; }
.last .autograph { left: 56px; top: -157px; }

/* Dock */
.dock { position: absolute; left: 50%; bottom: 10px; transform: translateX(-50%); display: flex; gap: 20px; height: 106px; padding: 14px 13px; border: 2px solid #a98478; border-radius: 32px; background: linear-gradient(90deg, #a57d70, #8e6a5e 12%, #93695e 24%, #7b5757 34%, #82605a 52%, #8b655a 70%, #966b5e 86%, #8f6156); }
.app { position: relative; width: 68px; height: 68px; }
.app svg { width: 68px; height: 68px; overflow: visible; filter: drop-shadow(0 1px 1px rgba(0,0,0,.3)); }
.open::after { content: ""; position: absolute; left: 30px; bottom: -18px; width: 8px; height: 8px; border-radius: 50%; background: #1a0806; }
.divider { width: 2px; height: 78px; margin: -2px 9px 0; background: #673a30; }
.badge { position: absolute; right: -10px; top: -9px; min-width: 32px; height: 32px; padding: 0 4px; border-radius: 16px; background: #fb3e34; color: #fff; font-size: 18px; line-height: 32px; text-align: center; }
.new { position: absolute; right: -5px; bottom: -5px; padding: 0 4px; border-radius: 4px; background: #16e5e6; color: #000; font-size: 14px; line-height: 16px; font-weight: 700; }
.cal { display: flex; flex-direction: column; height: 68px; border-radius: 16px; overflow: hidden; background: #fbfaf9; color: #2b2b2b; }
.cal-month { background: #f4554c; color: #fff; font-size: 14px; line-height: 21px; font-weight: 700; }
.cal-day { font-size: 38px; line-height: 45px; font-weight: 300; }
.petals { mix-blend-mode: multiply; opacity: .85; }
.tv { font: 600 27px Inter, sans-serif; fill: #fff; }
```
